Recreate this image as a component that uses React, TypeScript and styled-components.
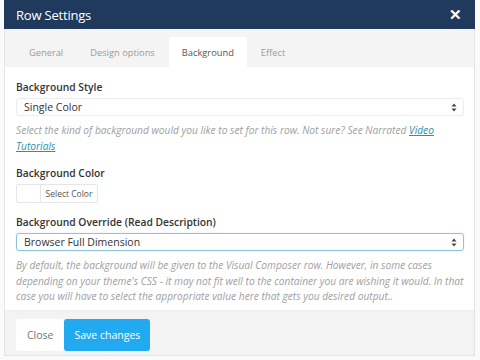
import React from "react";
import styled, { createGlobalStyle } from "styled-components";

const Global = createGlobalStyle`
  html, body { margin: 0; padding: 0; background: #ffffff; }
  body { width: 480px; height: 360px; overflow: hidden; font-family: "Open Sans", "Noto Sans", sans-serif; }
  * { box-sizing: border-box; }
`;

const Page = styled.div`
  width: 480px;
  height: 360px;
  padding-left: 4px;
  background: #fafafa;
`;

const Modal = styled.div`
  width: 471px;
  height: 356px;
  background: #fff;
  border: 1px solid #e3e3e3;
  border-top: none;
  display: flex;
  flex-direction: column;
`;

const Header = styled.div`
  height: 29px;
  flex-shrink: 0;
  margin: 0 -1px;
  background: #1f3a5d;
  display: flex;
  align-items: center;
  justify-content: space-between;
  padding: 0 13px 0 12px;
`;

const Title = styled.div`
  color: #fff;
  font-size: 13px;
  letter-spacing: -0.2px;
`;

const Close = styled.div`
  color: #fff;
  font-size: 15px;
  font-weight: 700;
  line-height: 1;
`;

const TabBar = styled.div`
  height: 38px;
  flex-shrink: 0;
  background: #f4f4f4;
  display: flex;
  align-items: flex-end;
  gap: 1px;
  padding-left: 11px;
`;

const Tab = styled.div<{ $active?: boolean }>`
  height: 30px;
  padding: 0 13px;
  display: flex;
  align-items: center;
  font-size: 9.3px;
  color: ${(p) => (p.$active ? "#555" : "#9a9a9a")};
  background: ${(p) => (p.$active ? "#fff" : "transparent")};
`;

const Body = styled.div`
  flex: 1;
  padding: 12px 11px 0 11px;
  display: flex;
  flex-direction: column;
`;

const Label = styled.div<{ $top?: number }>`
  font-size: 10.3px;
  font-weight: 600;
  color: #333;
  line-height: 16px;
  margin-top: ${(p) => p.$top ?? 0}px;
`;

const Select = styled.div<{ $focus?: boolean }>`
  margin-top: 3px;
  height: 18px;
  width: 448px;
  flex-shrink: 0;
  border: 1px solid ${(p) => (p.$focus ? "#8ec3dd" : "#ececec")};
  border-radius: 3px;
  display: flex;
  align-items: center;
  justify-content: space-between;
  padding: 0 6px 0 7px;
  font-size: 10.5px;
  color: #333;
  box-shadow: ${(p) => (p.$focus ? "0 0 1px rgba(100,170,210,0.5)" : "none")};
`;

const Help = styled.div<{ $top?: number; $lh?: number }>`
  margin-top: ${(p) => p.$top ?? 0}px;
  font-size: 10.2px;
  font-style: italic;
  color: #a0a0a0;
  line-height: ${(p) => p.$lh ?? 15.5}px;
  width: 448px;
`;

const Link = styled.a`
  color: #2f8ea8;
  text-decoration: underline;
`;

const ColorButton = styled.div`
  margin-top: 3px;
  height: 19px;
  width: 82px;
  flex-shrink: 0;
  border: 1px solid #e6e6e6;
  border-radius: 2px;
  display: flex;
`;

const Swatch = styled.div`
  width: 24px;
  border-right: 1px solid #e6e6e6;
  background: #fff;
`;

const ColorText = styled.div`
  flex: 1;
  display: flex;
  align-items: center;
  justify-content: center;
  font-size: 8.5px;
  color: #555;
`;

const Footer = styled.div`
  height: 45px;
  flex-shrink: 0;
  background: #f3f3f3;
  border-top: 1px solid #ededed;
  display: flex;
  align-items: flex-start;
  padding: 8px 0 0 11px;
`;

const Button = styled.div<{ $primary?: boolean }>`
  height: 32px;
  padding: 0 ${(p) => (p.$primary ? 10 : 11)}px;
  display: flex;
  align-items: center;
  font-size: 10.5px;
  border-radius: 3px;
  color: ${(p) => (p.$primary ? "#fff" : "#777")};
  background: ${(p) => (p.$primary ? "#22aaf0" : "#fff")};
`;

const Arrows = () => (
  <svg width="6" height="9" viewBox="0 0 6 9">
    <path d="M3 0.5 L5.5 3.5 H0.5 Z" fill="#444" />
    <path d="M3 8.5 L5.5 5.5 H0.5 Z" fill="#444" />
  </svg>
);

export default function App() {
  return (
    <>
      <Global />
      <Page>
        <Modal>
          <Header>
            <Title>Row Settings</Title>
            <Close>✕</Close>
          </Header>
          <TabBar>
            <Tab>General</Tab>
            <Tab>Design options</Tab>
            <Tab $active>Background</Tab>
            <Tab>Effect</Tab>
          </TabBar>
          <Body>
            <Label>Background Style</Label>
            <Select>
              <span>Single Color</span>
              <Arrows />
            </Select>
            <Help $top={6} $lh={16}>
              Select the kind of background would you like to set for this row. Not sure? See Narrated{" "}
              <Link>Video</Link> <Link>Tutorials</Link>
            </Help>
            <Label $top={11}>Background Color</Label>
            <ColorButton>
              <Swatch />
              <ColorText>Select Color</ColorText>
            </ColorButton>
            <Label $top={11}>Background Override (Read Description)</Label>
            <Select $focus>
              <span>Browser Full Dimension</span>
              <Arrows />
            </Select>
            <Help $top={7}>
              By default, the background will be given to the Visual Composer row. However, in some cases
              depending on your theme's CSS - it may not fit well to the container you are wishing it would. In that
              case you will have to select the appropriate value here that gets you desired output..
            </Help>
          </Body>
          <Footer>
            <Button>Close</Button>
            <Button $primary>Save changes</Button>
          </Footer>
        </Modal>
      </Page>
    </>
  );
}
